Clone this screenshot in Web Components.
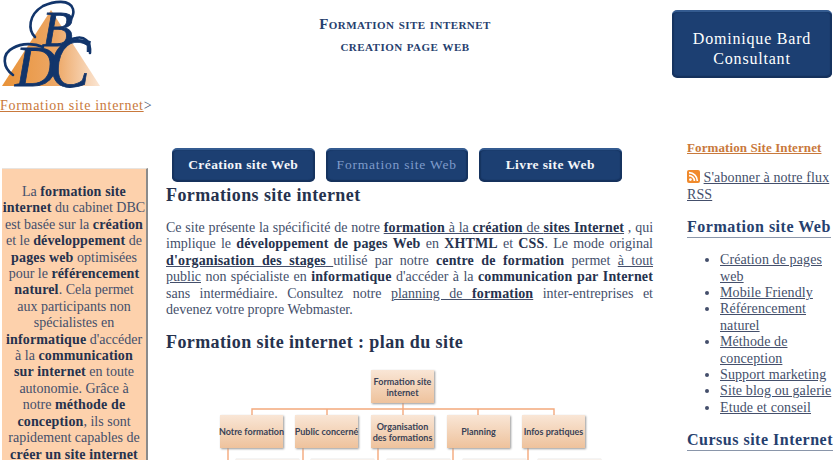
<!DOCTYPE html>
<html lang="fr">
<head>
<meta charset="utf-8">
<title>Formation site internet</title>
<style>
  html, body { margin: 0; height: 460px; overflow: hidden; background: #fff; }
  body { font: 14px/16.4px "Liberation Serif", serif; color: #444f6b; letter-spacing: .1px; }
</style>
</head>
<body>
<bdc-page></bdc-page>
<script>
class BdcLogo extends HTMLElement {
  constructor() {
    super();
    this.attachShadow({ mode: 'open' });
  }

  connectedCallback() {
    this.shadowRoot.innerHTML = `
      <style>
        :host { display: block; width: 102px; height: 97px; }
        svg { display: block; overflow: visible; }
        text { font-family: "Liberation Serif", serif; font-style: italic; fill: #12356b; stroke: #12356b; stroke-width: .8px; letter-spacing: 0; }
        .b { font-size: 51px; }
        .d { font-size: 58px; }
        .c { font-size: 72px; }
      </style>
      <svg width="102" height="104" viewBox="0 0 102 104">
        <defs>
          <linearGradient id="tri" x1="0" x2="1" y1="0" y2="0">
            <stop offset="0" stop-color="#e89238"/>
            <stop offset=".55" stop-color="#eda765"/>
            <stop offset="1" stop-color="#fbe6d4"/>
          </linearGradient>
        </defs>
        <polygon points="2,86 51,10 100,86" fill="url(#tri)"/>
        <text class="b" x="42" y="46">B</text>
        <text class="d" x="15" y="86">D</text>
        <text class="c" transform="translate(49 87) scale(.85 1)">C</text>
        <g fill="none" stroke="#12356b" stroke-width="2.6" stroke-linecap="round">
          <path d="M35 37C28 30 28 15 43 6C54 1 70 -1 73 9C74 13 73 16 71 19"/>
          <path d="M13 75C3 68 1 54 13 48C22 43 34 43 43 47"/>
          <path d="M90 53C91 41 84 36 76 38C70 39 66 41 63 45"/>
        </g>
      </svg>
    `;
  }
}

class SiteTitle extends HTMLElement {
  constructor() {
    super();
    this.attachShadow({ mode: 'open' });
  }

  connectedCallback() {
    this.shadowRoot.innerHTML = `
      <style>
        :host { display: block; text-align: center; color: #26406e; font-weight: 700; font-variant: small-caps; letter-spacing: .45px; }
        div { font-size: 15px; line-height: 22px; }
      </style>
      <div>Formation site internet</div>
      <div>creation page web</div>
    `;
  }
}

class BlueButton extends HTMLElement {
  constructor() {
    super();
    this.attachShadow({ mode: 'open' });
  }

  connectedCallback() {
    this.shadowRoot.innerHTML = `
      <style>
        :host {
          display: flex; align-items: center; justify-content: center; text-align: center; box-sizing: border-box;
          color: #f4f6fa; background: #1c3f72; border-radius: 5px; font-weight: 700;
          letter-spacing: .4px;
          border-top: 2px solid #345b90; border-bottom: 2px solid #15315c;
          box-shadow: inset 2px 0 1px #16335f, inset -2px 0 1px #16335f;
        }
        :host([active]) { color: #7f9ccb; font-weight: 400; letter-spacing: .8px; }
      </style>
      <slot></slot>
    `;
  }
}

class IntroBox extends HTMLElement {
  constructor() {
    super();
    this.attachShadow({ mode: 'open' });
  }

  connectedCallback() {
    this.shadowRoot.innerHTML = `
      <style>
        :host {
          display: block; box-sizing: border-box; width: 146px; margin-left: 2px; padding: 15px 0 40px;
          background: #fdd1ac; border-right: 2px solid #8b8b8b; border-top: 1px solid #e8e4e0;
          text-align: center; white-space: nowrap; letter-spacing: 0;
        }
        ::slotted(b) { color: #26324e; letter-spacing: .2px; }
      </style>
      <slot></slot>
    `;
  }
}

class OrgChart extends HTMLElement {
  constructor() {
    super();
    this.attachShadow({ mode: 'open' });
  }

  connectedCallback() {
    // x, y are relative to the chart box, drawn at page (166, 369)
    const nodes = [
      [205, 0, 'Formation site<br>internet'],
      [54, 45, 'Notre formation'],
      [129, 45, 'Public concerné'],
      [205, 45, 'Organisation<br>des formations'],
      [281, 45, 'Planning'],
      [356, 45, 'Infos pratiques'],
    ];
    const lower = [70, 145, 221, 297, 372];
    this.shadowRoot.innerHTML = `
      <style>
        :host { display: block; position: relative; width: 487px; height: 100px; }
        svg { position: absolute; left: 0; top: 0; }
        .node {
          position: absolute; box-sizing: border-box; width: 63px; height: 33px;
          display: flex; align-items: center; justify-content: center; text-align: center; white-space: nowrap;
          font: 700 9px/11px Lato, sans-serif; letter-spacing: 0; color: #3a4256;
          background: linear-gradient(#f9e6d6, #eec29c);
          box-shadow: 1px 1px 2px #999;
        }
        .low { top: 89px; background: #f7f1ec; box-shadow: 0 0 1px #bbb; }
      </style>
      <svg width="487" height="100" fill="none" stroke="#f4a97c" stroke-width="1.4">
        <path d="M237 33V45M86 45V39H388V45M161 39V45M312 39V45"/>
        <path d="M62 78V100M137 78V100M212 78V100M287 78V100M362 78V100"/>
      </svg>
      ${nodes.map(([x, y, label]) => `<div class="node" style="left:${x}px;top:${y}px">${label}</div>`).join('')}
      ${lower.map((x) => `<div class="node low" style="left:${x}px"></div>`).join('')}
    `;
  }
}

class RssIcon extends HTMLElement {
  constructor() {
    super();
    this.attachShadow({ mode: 'open' });
  }

  connectedCallback() {
    this.shadowRoot.innerHTML = `
      <style>:host { display: inline-block; width: 13px; height: 13px; vertical-align: -1px; } svg { display: block; }</style>
      <svg width="13" height="13" viewBox="0 0 13 13">
        <rect width="13" height="13" rx="2" fill="#f08a2c"/>
        <circle cx="3.4" cy="9.6" r="1.4" fill="#fff"/>
        <path d="M2 5.6A5.4 5.4 0 0 1 7.4 11M2 2.6A8.4 8.4 0 0 1 10.4 11" fill="none" stroke="#fff" stroke-width="1.6"/>
      </svg>
    `;
  }
}

class SideMenu extends HTMLElement {
  constructor() {
    super();
    this.attachShadow({ mode: 'open' });
  }

  connectedCallback() {
    const items = ['Création de pages web', 'Mobile Friendly', 'Référencement naturel', 'Méthode de conception', 'Support marketing', 'Site blog ou galerie', 'Etude et conseil'];
    this.shadowRoot.innerHTML = `
      <style>
        :host { display: block; width: 147px; }
        a { color: inherit; text-decoration: underline; }
        .top { color: #c9793c; font-weight: 700; font-size: 13px; display: block; }
        p { margin: 14px 0 0; }
        h3 { display: inline-block; margin: 14px 0 0; font-size: 16px; line-height: 20px; font-weight: 700; color: #26406e; border-bottom: 1px solid #8a96aa; letter-spacing: .5px; white-space: nowrap; }
        ul { margin: 14px 0 0; padding: 0 0 0 33px; }
      </style>
      <a class="top" href="#">Formation Site Internet</a>
      <p><rss-icon></rss-icon> <a href="#">S'abonner à notre flux RSS</a></p>
      <h3>Formation site Web</h3>
      <ul>${items.map((item) => `<li><a href="#">${item}</a></li>`).join('')}</ul>
      <h3>Cursus site Internet</h3>
    `;
  }
}

class BdcPage extends HTMLElement {
  constructor() {
    super();
    this.attachShadow({ mode: 'open' });
  }

  connectedCallback() {
    this.shadowRoot.innerHTML = `
      <style>
        :host { display: block; width: 840px; height: 460px; overflow: hidden; }
        a { color: inherit; text-decoration: underline; }
        b { color: #26324e; letter-spacing: .15px; }
        .head { display: flex; height: 97px; }
        site-title { flex: 1; padding-top: 13px; padding-left: 44px; margin-right: 8px; }
        .consult { width: 160px; height: 68px; margin: 10px 8px 0 0; padding-top: 10px; font-size: 16px; line-height: 20px; font-weight: 400; letter-spacing: .8px; color: #fff; }
        .crumb { color: #c9793c; height: 43px; padding-top: 1px; box-sizing: border-box; letter-spacing: .7px; }
        .crumb span { color: #444f6b; }
        .cols { display: flex; }
        .left { padding-top: 28px; width: 166px; }
        .mid { width: 487px; margin-right: 34px; padding-top: 8px; }
        .nav { display: flex; gap: 11px; margin-left: 6px; }
        .nav blue-button { width: 142.5px; height: 34px; font-size: 13.5px; }
        h1, h2 { margin: 0; font-size: 18px; line-height: 22px; color: #26324e; letter-spacing: .4px; }
        h1 { margin-top: 2px; }
        h2 { margin-top: 13px; }
        p { margin: 14px 0 0; text-align: justify; text-align-last: justify; letter-spacing: 0; }
        .end { display: block; text-align-last: left; }
        org-chart { margin-top: 17px; }
      </style>
      <div class="head">
        <bdc-logo></bdc-logo>
        <site-title></site-title>
        <blue-button class="consult">Dominique Bard<br>Consultant</blue-button>
      </div>
      <div class="crumb"><a href="#">Formation site internet</a><span>&gt;</span></div>
      <div class="cols">
        <div class="left">
          <intro-box>La <b>formation site</b><br><b>internet</b> du cabinet DBC<br>est basée sur la <b>création</b><br>et le <b>développement</b> de<br><b>pages web</b> optimisées<br>pour le <b>référencement</b><br><b>naturel</b>. Cela permet<br>aux participants non<br>spécialistes en<br><b>informatique</b> d'accéder<br>à la <b>communication</b><br><b>sur internet</b> en toute<br>autonomie. Grâce à<br>notre <b>méthode de</b><br><b>conception</b>, ils sont<br>rapidement capables de<br><b>créer un site internet</b></intro-box>
        </div>
        <div class="mid">
          <div class="nav">
            <blue-button>Création site Web</blue-button>
            <blue-button active>Formation site Web</blue-button>
            <blue-button>Livre site Web</blue-button>
          </div>
          <h1>Formations site internet</h1>
          <p>Ce site présente la spécificité de notre <a href="#"><b>formation</b> à la <b>création</b> de <b>sites Internet</b></a> , qui<br>implique le <b>développement de pages Web</b> en <b>XHTML</b> et <b>CSS</b>. Le mode original<br><a href="#"><b>d'organisation des stages</b> </a>utilisé par notre <b>centre de formation</b> permet <a href="#">à tout<br>public</a> non spécialiste en <b>informatique</b> d'accéder à la <b>communication par Internet</b><br>sans intermédiaire. Consultez notre <a href="#">planning de <b>formation</b></a> inter-entreprises et<br><span class="end">devenez votre propre Webmaster.</span></p>
          <h2>Formation site internet : plan du site</h2>
          <org-chart></org-chart>
        </div>
        <side-menu></side-menu>
      </div>
    `;
  }
}

customElements.define('bdc-logo', BdcLogo);
customElements.define('site-title', SiteTitle);
customElements.define('blue-button', BlueButton);
customElements.define('intro-box', IntroBox);
customElements.define('org-chart', OrgChart);
customElements.define('rss-icon', RssIcon);
customElements.define('side-menu', SideMenu);
customElements.define('bdc-page', BdcPage);
</script>
</body>
</html>
